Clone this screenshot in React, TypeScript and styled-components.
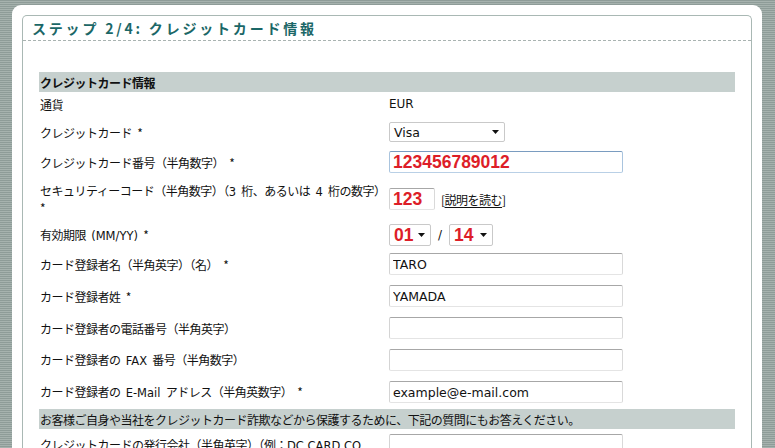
import React from "react";
import styled, { createGlobalStyle } from "styled-components";

const Global = createGlobalStyle`
  html, body { margin: 0; padding: 0; }
  body {
    background: repeating-linear-gradient(180deg, #8e9c98 0px, #8e9c98 1px, #a6b2ae 1px, #a6b2ae 2px);
    min-height: 448px;
    overflow: hidden;
  }
`

const Page = styled.div`
  padding: 5px 13px 0 12px;
  height: 448px;
  box-sizing: border-box;
  font-family: "Noto Sans CJK JP", "DejaVu Sans", sans-serif;
  font-size: 12px;
  color: #111;
`

const Panel = styled.div`
  background: #fff;
  border-radius: 9px 9px 0 0;
  padding: 10px 10px 0;
  height: 100%;
  box-sizing: border-box;
`

const Box = styled.div`
  border: 1px solid #a9b8b4;
  border-bottom: none;
  border-radius: 5px 5px 0 0;
  height: 100%;
  box-sizing: border-box;
`

const Header = styled.div`
  height: 24px;
  border-bottom: 1px dashed #a9b3b1;
  display: flex;
  align-items: center;
  padding-left: 9px;
`

const Title = styled.h1`
  margin: 0;
  font-size: 14px;
  font-weight: bold;
  letter-spacing: 2.8px;
  color: #1b6767;
  font-family: "Noto Sans CJK JP", sans-serif;
  line-height: 1;
`

const Content = styled.div`
  padding: 31px 16px 0;
`

const Bar = styled.div<{ $bold?: boolean; $mt?: number }>`
  background: #c6d0ce;
  height: 20px;
  margin-top: ${p => p.$mt || 0}px;
  display: flex;
  align-items: center;
  padding-left: 1px;
  font-weight: ${p => (p.$bold ? "bold" : "normal")};
  font-size: 12px;
  letter-spacing: -0.5px;
  white-space: nowrap;
`

const Row = styled.div<{ $h: number }>`
  height: ${p => p.$h}px;
  display: grid;
  grid-template-columns: 350px 1fr;
  align-items: center;
`

const Label = styled.div`
  font-size: 12px;
  line-height: 15px;
  padding-left: 1px;
  letter-spacing: -0.5px;
  word-spacing: 3px;
  white-space: nowrap;
`

const Latin = styled.span`
  font-family: "DejaVu Sans", sans-serif;
  font-size: 11.5px;
  letter-spacing: 0;
  word-spacing: 0;
`

const Field = styled.div`
  display: flex;
  align-items: center;
  gap: 6px;
`

const Plain = styled.span`
  font-family: "DejaVu Sans", sans-serif;
  font-size: 12px;
`

const TextInput = styled.input<{ $w?: number; $red?: boolean; $focus?: boolean }>`
  width: ${p => p.$w || 234}px;
  height: 22px;
  box-sizing: border-box;
  margin: 0;
  padding: 0 3px;
  border: 1px solid;
  border-color: ${p => (p.$focus ? "#7a9cc0 #a9c4de #b9d0e6 #a9c4de" : "#a7a7a7 #d9d9d9 #e4e4e4 #d4d4d4")};
  border-radius: 2px;
  outline: none;
  background: #fff;
  font-family: ${p => (p.$red ? '"Liberation Sans", Arial, sans-serif' : '"DejaVu Sans", sans-serif')};
  font-size: ${p => (p.$red ? "17.5px" : "12.5px")};
  font-weight: ${p => (p.$red ? "bold" : "normal")};
  color: ${p => (p.$red ? "#dd1e28" : "#111")};
`

const Select = styled.div<{ $w: number; $red?: boolean }>`
  width: ${p => p.$w}px;
  height: ${p => (p.$red ? 22 : 20)}px;
  box-sizing: border-box;
  border: 1px solid #c9c9c9;
  border-radius: 2px;
  background: #fff;
  display: flex;
  align-items: center;
  justify-content: space-between;
  padding: 0 5px 0 4px;
  font-family: ${p => (p.$red ? '"Liberation Sans", Arial, sans-serif' : '"DejaVu Sans", sans-serif')};
  font-size: ${p => (p.$red ? "17.5px" : "12.5px")};
  font-weight: ${p => (p.$red ? "bold" : "normal")};
  color: ${p => (p.$red ? "#dd1e28" : "#111")};
`

const HelpLink = styled.span`
  font-size: 12px;
  letter-spacing: -0.5px;
  color: #111;
  & u { text-underline-offset: 2px; }
`

const Slash = styled.span`
  font-family: "DejaVu Sans", sans-serif;
  font-size: 12px;
  margin: 0 1px;
`

const Arrow = () => (
  <svg width="7" height="4" viewBox="0 0 7 4">
    <path d="M0 0h7L3.5 4z" fill="#111" />
  </svg>
)

export default function App() {
  return (
    <>
      <Global />
      <Page>
        <Panel>
          <Box>
            <Header>
              <Title>ステップ 2/4: クレジットカード情報</Title>
            </Header>
            <Content>
              <Bar $bold>クレジットカード情報</Bar>
              <Row $h={24}>
                <Label>通貨</Label>
                <Plain>EUR</Plain>
              </Row>
              <Row $h={32}>
                <Label>クレジットカード *</Label>
                <Field>
                  <Select $w={116}>
                    Visa
                    <Arrow />
                  </Select>
                </Field>
              </Row>
              <Row $h={28}>
                <Label>クレジットカード番号（半角数字） *</Label>
                <Field>
                  <TextInput $red $focus readOnly defaultValue="123456789012" />
                </Field>
              </Row>
              <Row $h={46}>
                <Label>
                  セキュリティーコード（半角数字）（<Latin>3</Latin> 桁、あるいは <Latin>4</Latin> 桁の数字）
                  <br />*
                </Label>
                <Field>
                  <TextInput $w={46} $red readOnly defaultValue="123" />
                  <HelpLink>
                    [<u>説明を読む</u>]
                  </HelpLink>
                </Field>
              </Row>
              <Row $h={26}>
                <Label>
                  有効期限 <Latin>(MM/YY)</Latin> *
                </Label>
                <Field>
                  <Select $w={42} $red>
                    01
                    <Arrow />
                  </Select>
                  <Slash>/</Slash>
                  <Select $w={44} $red>
                    14
                    <Arrow />
                  </Select>
                </Field>
              </Row>
              <Row $h={32}>
                <Label>カード登録者名（半角英字）（名） *</Label>
                <Field>
                  <TextInput readOnly defaultValue="TARO" />
                </Field>
              </Row>
              <Row $h={32}>
                <Label>カード登録者姓 *</Label>
                <Field>
                  <TextInput readOnly defaultValue="YAMADA" />
                </Field>
              </Row>
              <Row $h={32}>
                <Label>カード登録者の電話番号（半角英字）</Label>
                <Field>
                  <TextInput readOnly defaultValue="" />
                </Field>
              </Row>
              <Row $h={32}>
                <Label>
                  カード登録者の <Latin>FAX</Latin> 番号（半角数字）
                </Label>
                <Field>
                  <TextInput readOnly defaultValue="" />
                </Field>
              </Row>
              <Row $h={32}>
                <Label>
                  カード登録者の <Latin>E-Mail</Latin> アドレス（半角英数字） *
                </Label>
                <Field>
                  <TextInput readOnly defaultValue="example@e-mail.com" />
                </Field>
              </Row>
              <Bar $mt={1}>
                お客様ご自身や当社をクレジットカード詐欺などから保護するために、下記の質問にもお答えください。
              </Bar>
              <Row $h={32}>
                <Label>
                  クレジットカードの発行会社（半角英字）（例：<Latin>DC CARD CO.,</Latin>
                </Label>
                <Field>
                  <TextInput readOnly defaultValue="" />
                </Field>
              </Row>
            </Content>
          </Box>
        </Panel>
      </Page>
    </>
  );
}
